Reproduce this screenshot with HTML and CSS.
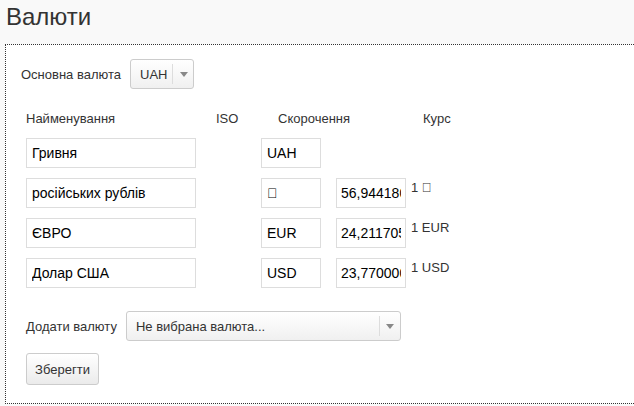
FILE: index.html
```html
<!DOCTYPE html>
<html lang="uk">
<head>
<meta charset="utf-8">
<title>Валюти</title>
<link rel="stylesheet" href="styles.css">
</head>
<body>
<h1 class="title">Валюти</h1>
<div class="panel">
  <div class="base-row">
    <span class="label">Основна валюта</span>
    <div class="select select-small">
      <span class="select-text">UAH</span>
      <span class="select-arrow"><span class="caret"></span></span>
    </div>
  </div>

  <div class="table">
    <div class="thead">
      <span class="th th-name">Найменування</span>
      <span class="th th-iso">ISO</span>
      <span class="th th-abbr">Скорочення</span>
      <span class="th th-rate">Курс</span>
    </div>
    <div class="trow">
      <input class="inp inp-name" type="text" value="Гривня">
      <span class="iso"></span>
      <input class="inp inp-abbr" type="text" value="UAH">
    </div>
    <div class="trow">
      <input class="inp inp-name" type="text" value="російських рублів">
      <span class="iso"></span>
      <input class="inp inp-abbr" type="text" value="&#xE000;">
      <input class="inp inp-rate" type="text" value="56,94418000">
      <span class="rate-label">1 &#xE000;</span>
    </div>
    <div class="trow">
      <input class="inp inp-name" type="text" value="ЄВРО">
      <span class="iso"></span>
      <input class="inp inp-abbr" type="text" value="EUR">
      <input class="inp inp-rate" type="text" value="24,21170500">
      <span class="rate-label">1 EUR</span>
    </div>
    <div class="trow">
      <input class="inp inp-name" type="text" value="Долар США">
      <span class="iso"></span>
      <input class="inp inp-abbr" type="text" value="USD">
      <input class="inp inp-rate" type="text" value="23,77000000">
      <span class="rate-label">1 USD</span>
    </div>
  </div>

  <div class="add-row">
    <span class="label">Додати валюту</span>
    <div class="select select-wide">
      <span class="select-text">Не вибрана валюта...</span>
      <span class="select-arrow"><span class="caret"></span></span>
    </div>
  </div>

  <div class="actions">
    <button class="btn" type="button">Зберегти</button>
  </div>
</div>
</body>
</html>
```

FILE: styles.css
```css
html, body {
  margin: 0;
  padding: 0;
}
body {
  background: #f9f9f9;
  font-family: "Liberation Sans", Arial, sans-serif;
  color: #333;
  overflow: hidden;
}
.title {
  margin: 0;
  padding-left: 6px;
  height: 44px;
  line-height: 34px;
  font-size: 24px;
  font-weight: normal;
  color: #333;
}
.panel {
  margin-left: 5px;
  height: 344px;
  border: 1px dotted #333;
  border-right: none;
  background: #fff;
  padding: 14px 0 0 15px;
  box-sizing: content-box;
}
.base-row {
  display: flex;
  align-items: center;
  gap: 9px;
  height: 30px;
}
.label {
  font-size: 13px;
  color: #333;
}
.select {
  display: flex;
  align-items: center;
  box-sizing: border-box;
  height: 30px;
  border: 1px solid #ccc;
  border-radius: 3px;
  background: linear-gradient(#ffffff, #f0f0f0);
  font-size: 13px;
  color: #333;
}
.select-text {
  flex: 1;
  padding-left: 9px;
  white-space: nowrap;
}
.select-arrow {
  display: flex;
  align-items: center;
  justify-content: center;
  width: 20px;
  height: 20px;
  border-left: 1px solid #ddd;
}
.caret {
  width: 0;
  height: 0;
  border-left: 4px solid transparent;
  border-right: 4px solid transparent;
  border-top: 5px solid #888;
  margin-left: 1px;
}
.select-small {
  width: 64px;
}
.select-wide {
  width: 275px;
}
.table {
  margin-left: 5px;
  margin-top: 19px;
}
.thead {
  display: flex;
  height: 20px;
  align-items: center;
  font-size: 13px;
  color: #333;
  margin-bottom: 10px;
}
.th-name { width: 190px; }
.th-iso { width: 62px; }
.th-abbr { width: 145px; }
.trow {
  display: flex;
  align-items: flex-start;
  height: 30px;
  margin-bottom: 10px;
}
.inp {
  box-sizing: border-box;
  height: 30px;
  border: 1px solid #ddd;
  padding: 0 4px 0 5px;
  font-family: "Liberation Sans", Arial, sans-serif;
  font-size: 14px;
  color: #000;
  background: #fff;
  margin: 0;
  outline: none;
}
.inp-name { width: 170px; }
.iso { width: 65px; flex: none; }
.inp-abbr { width: 60px; }
.inp-rate { width: 70px; margin-left: 15px; padding-left: 4px; }
.rate-label {
  margin-left: 5px;
  margin-top: 2px;
  font-size: 13px;
  color: #333;
}
.add-row {
  display: flex;
  align-items: center;
  gap: 9px;
  margin-left: 5px;
  margin-top: 23px;
  height: 30px;
}
.actions {
  margin-left: 5px;
  margin-top: 12px;
}
.btn {
  box-sizing: border-box;
  width: 73px;
  height: 32px;
  border: 1px solid #ccc;
  border-radius: 3px;
  background: linear-gradient(#ffffff, #ebebeb);
  font-family: "Liberation Sans", Arial, sans-serif;
  font-size: 13px;
  color: #333;
  padding: 0;
}
```
